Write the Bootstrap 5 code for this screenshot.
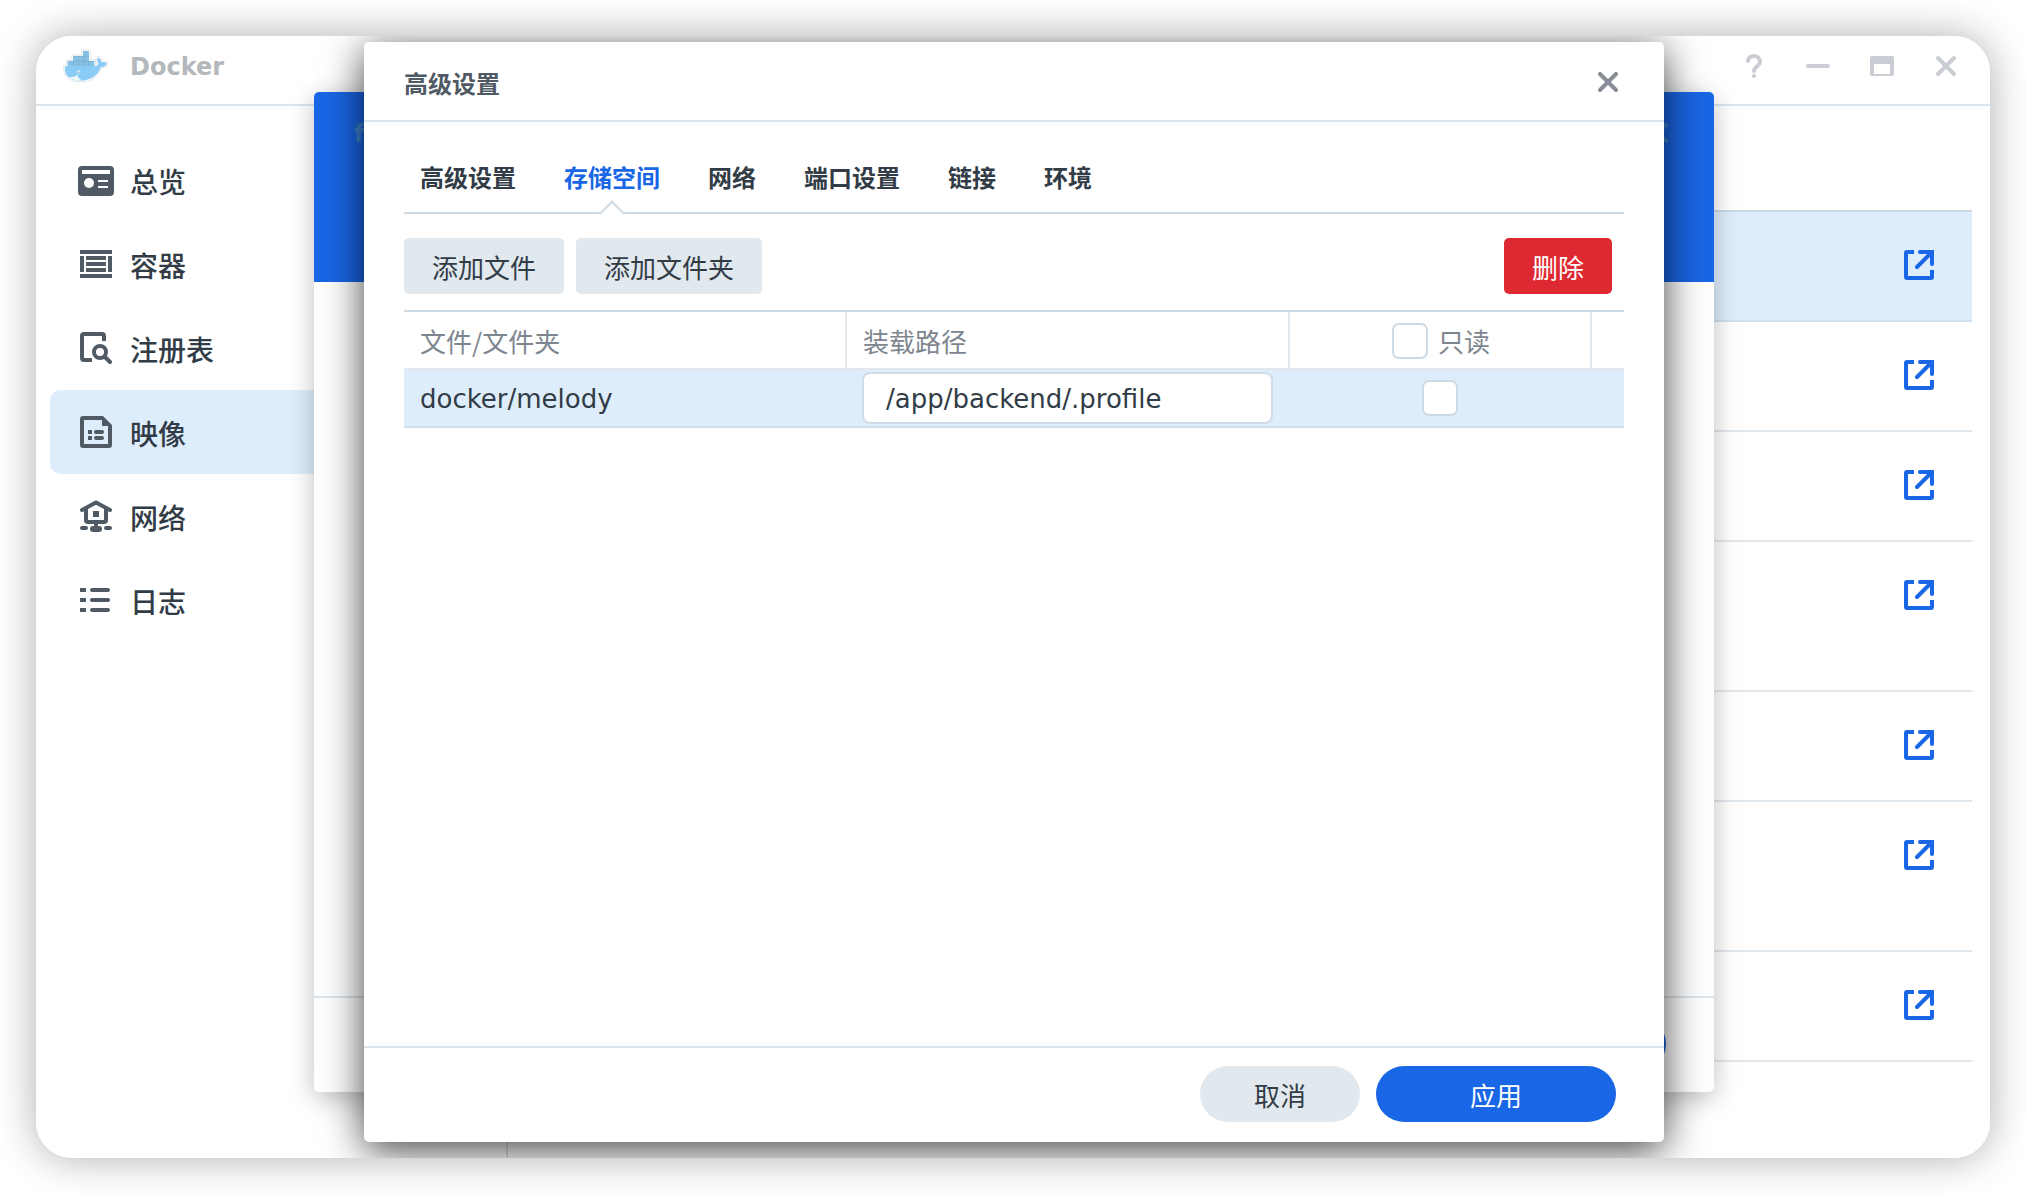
<!DOCTYPE html>
<html lang="zh-CN">
<head>
<meta charset="utf-8">
<meta name="viewport" content="width=device-width, initial-scale=1">
<title>Docker</title>
<link href="https://cdn.jsdelivr.net/npm/bootstrap@5.3.0/dist/css/bootstrap.min.css" rel="stylesheet">
<style>
  :root {
    --ui-blue: #1966e6;
    --ui-ink: #323c46;
    --ui-line: #dbe5ed;
    --ui-line-strong: #cddae4;
    --ui-select: #deedfc;
    --ui-soft: #e1e8ee;
  }
  body { font-family: "Noto Sans CJK SC", "DejaVu Sans", sans-serif; color: var(--ui-ink); font-size: 26px; line-height: 40px; background: #fff; }
  .latin { font-family: "DejaVu Sans", "Noto Sans CJK SC", sans-serif; }
  .desktop { height: 100vh; min-height: 800px; padding: 36px; overflow: hidden; }
  .app-window { border-radius: 36px; box-shadow: 0 0 42px rgba(0,0,0,.32); }
  .app-clip { border-radius: inherit; }
  .app-bar { height: 70px; padding: 0 32px 8px 26px; border-bottom: 2px solid var(--ui-line); }
  .app-name { font-size: 24px; font-weight: 700; color: #b3b8bc; padding-top: 2px; }
  .bare { border: 0; background: none; padding: 0; display: block; line-height: 0; }
  .window-tools { gap: 40px; color: #cacdd3; }
  .window-tools .bare { color: inherit; }

  .side { width: 472px; padding: 32px 14px; border-right: 2px solid var(--ui-line); }
  .side-item { height: 84px; padding: 2px 28px 0; gap: 16px; border-radius: 10px; font-size: 28px; font-weight: 500; color: var(--ui-ink); text-decoration: none; }
  .side-item svg { color: #505a64; margin-bottom: 2px; }
  .side-item.active { background: var(--ui-select); }

  .image-list { margin: 104px 18px 0 0; border-top: 2px solid var(--ui-line-strong); }
  .image-row { height: 110px; padding: 38px 38px 0; border-bottom: 2px solid #e1e8ed; color: var(--ui-blue); }
  .image-row.tall { height: 150px; }
  .image-row.active { background: var(--ui-select); border-color: #d1e0ee; }
  .image-row a { color: inherit; line-height: 0; }

  .layer { position: absolute; inset: 0; }
  .layer-back { padding: 56px 276px 66px 278px; }
  .layer-front { padding: 6px 326px 16px 328px; }
  .dlg { background: #fff; border-radius: 5px; overflow: hidden; }
  .layer-back .dlg { box-shadow: 0 6px 26px rgba(0,0,0,.26); }
  .layer-front .dlg { box-shadow: 0 8px 40px rgba(0,0,0,.74); }
  .dlg-head { height: 80px; padding: 2px 46px 0 40px; border-bottom: 2px solid var(--ui-line); }
  .dlg-title { font-size: 24px; font-weight: 700; color: #505a64; line-height: 40px; padding-top: 2px; }
  .dlg-head .bare { color: #868e98; }
  .hero { height: 190px; background: var(--ui-blue); }
  .hero .dlg-head { border: 0; }
  .hero .dlg-title, .hero .bare { color: #3f86d0; }
  .dlg-body { padding: 0 40px; }
  .dlg-foot { height: 96px; padding: 0 48px 2px; gap: 16px; border-top: 2px solid var(--ui-line); }
  .pill { height: 56px; font-size: 26px; line-height: 40px; padding: 9px 8px 7px; border: 0; border-radius: 28px; width: 160px; background: var(--ui-soft); color: var(--ui-ink); }
  .pill-main { width: 240px; background: var(--ui-blue); color: #fff; }

  .tab-strip { padding: 32px 16px 0; gap: 48px; height: 92px; border-bottom: 2px solid var(--ui-line-strong); list-style: none; }
  .tab-btn { border: 0; background: none; padding: 3px 0 15px; font-size: 24px; line-height: 40px; font-weight: 700; color: var(--ui-ink); position: relative; display: block; }
  .tab-btn.active { color: var(--ui-blue); }
  .tab-btn.active::after { content: ""; position: absolute; left: 50%; bottom: -10px; width: 18px; height: 18px; margin-left: -9px; transform: rotate(45deg); background: #fff; border: solid var(--ui-line-strong); border-width: 2px 0 0 2px; }

  .tools { padding: 24px 12px 16px 0; gap: 12px; }
  .tool-btn { height: 56px; padding: 9px 28px 7px; border: 0; border-radius: 5px; font-size: 26px; line-height: 40px; background: var(--ui-soft); color: var(--ui-ink); }
  .tool-btn.danger { background: #de2932; color: #fff; }

  .mounts { table-layout: fixed; border-collapse: separate; border-spacing: 0; border-top: 2px solid var(--ui-line-strong); width: 100%; }
  .mounts th { height: 58px; padding: 2px 14px 0 16px; font-weight: 400; color: #7d868f; border-right: 2px solid #e1e8ed; border-bottom: 2px solid #e1e8ed; }
  .mounts th:last-child { border-right: 0; }
  .mounts td { height: 58px; padding: 0 18px 0 16px; background: var(--ui-select); border-bottom: 2px solid #d1e0ee; }
  .mounts td:first-child { padding-top: 2px; }
  .mounts td:nth-child(2) { padding: 0 17px 0 15px; }
  .path-box { display: block; height: 52px; width: 100%; border: 2px solid #d1dce6; border-radius: 8px; padding: 2px 22px 0; font-size: 26px; color: var(--ui-ink); background: #fff; }
  .col-path { width: 443px; }
  .col-ro { width: 302px; }
  .mounts .tick { width: 36px; height: 36px; margin: 0; border: 2px solid var(--ui-line-strong); border-radius: 7px; background-color: #fff; flex: none; display: block; }
  .tick-label { gap: 10px; }
</style>
</head>
<body>
<svg class="d-none" xmlns="http://www.w3.org/2000/svg">
  <symbol id="i-open" viewBox="0 0 30 30"><g fill="none" stroke="currentColor" stroke-width="4"><path d="M10 2H3Q2 2 2 3V27Q2 28 3 28H27Q28 28 28 27V20"/><path d="M16 2H28V14M28 2L13 17" stroke-linecap="round"/></g></symbol>
  <symbol id="i-x" viewBox="0 0 24 24"><path d="M4 4L20 20M20 4L4 20" fill="none" stroke="currentColor" stroke-width="4" stroke-linecap="round"/></symbol>
</svg>

<div class="desktop d-flex">
  <div class="app-window flex-fill d-flex">
    <div class="app-clip flex-fill d-flex flex-column bg-white position-relative overflow-hidden">
      <header class="app-bar d-flex align-items-center justify-content-between">
        <div class="d-flex align-items-center">
          <svg width="48" height="34" viewBox="186 147 144 102" aria-hidden="true">
            <path d="M195 198L203 196V183H219V168H249V153H267V183H283V198H288C296 196 297 190 292 184C288 180 293 173 296 173C301 176 304 182 305 187C311 185 318 187 321 191C317 199 309 202 303 202C291 229 271 242 240 242C209 242 191 226 195 198Z" fill="#fff" stroke="#d9dde0" stroke-width="9" stroke-linejoin="round"/>
            <path d="M195 198L203 196V183H219V168H249V153H267V183H283V198H288C296 196 297 190 292 184C288 180 293 173 296 173C301 176 304 182 305 187C311 185 318 187 321 191C317 199 309 202 303 202C291 229 271 242 240 242C209 242 191 226 195 198Z" fill="#8accf5" stroke="#fff" stroke-width="5" stroke-linejoin="round"/>
            <path d="M195 198H288C296 196 297 190 292 184C288 180 293 173 296 173C301 176 304 182 305 187C311 185 318 187 321 191C317 199 309 202 303 202C291 229 271 242 240 242C209 242 191 226 195 198Z" fill="#8accf5"/>
            <path d="M203 183H219V168H249V153H267V183H283V198H203Z" fill="#86c0e3"/>
            <path d="M219 183V198M235 168V198M251 168V198M267 183V198M203 184H283M219 169H267" stroke="#6fabcf" stroke-width="1.5" fill="none"/>
            <circle cx="236" cy="216" r="5" fill="#e9f5fc"/><circle cx="236" cy="217" r="2.500" fill="#879aa6"/>
            <path d="M205 231C217 233 226 230 232 224C233 232 237 237 246 241C229 244 214 239 205 231Z" fill="#f0f7fb"/>
          </svg>
          <span class="app-name latin ms-3 ps-1">Docker</span>
        </div>
        <div class="window-tools d-flex align-items-center">
          <button class="bare" type="button" aria-label="帮助"><svg width="24" height="24" viewBox="0 0 24 24"><path d="M6 7C6 3.500 9 2 12 2S18 4 18 8C18 12 12 12.500 12 17" fill="none" stroke="currentColor" stroke-width="4" stroke-linecap="round"/><circle cx="12" cy="22" r="2" fill="currentColor"/></svg></button>
          <button class="bare" type="button" aria-label="最小化"><svg width="24" height="24" viewBox="0 0 24 24"><rect y="10" width="24" height="4" rx="2" fill="currentColor"/></svg></button>
          <button class="bare" type="button" aria-label="最大化"><svg width="24" height="24" viewBox="0 0 24 24"><path fill="currentColor" fill-rule="evenodd" d="M2 2H22Q24 2 24 4V20Q24 22 22 22H2Q0 22 0 20V4Q0 2 2 2ZM4 10V20H20V10Z"/></svg></button>
          <button class="bare" type="button" aria-label="关闭"><svg width="24" height="24"><use href="#i-x"/></svg></button>
        </div>
      </header>

      <div class="flex-fill d-flex">
        <nav class="side flex-shrink-0">
          <a class="side-item d-flex align-items-center" href="#"><svg width="36" height="32" viewBox="0 0 36 32" fill="currentColor"><rect y="2" width="36" height="30" rx="4"/><g fill="#fff"><path d="M4 6H32V10H4ZM20 16H30V18H20ZM20 22H30V24H20Z"/><circle cx="11" cy="19" r="5"/></g></svg>总览</a>
          <a class="side-item d-flex align-items-center" href="#"><svg width="36" height="32" viewBox="0 0 36 32" fill="currentColor"><path d="M2 2H34V6H2ZM2 26H34V30H2ZM2 8H6V24H2ZM30 8H34V24H30ZM8 8H28V12H8ZM8 14H28V18H8ZM8 20H28V24H8Z"/></svg>容器</a>
          <a class="side-item d-flex align-items-center" href="#"><svg width="36" height="32" viewBox="0 0 36 32" fill="none" stroke="currentColor" stroke-width="4"><path d="M26 9V4Q26 2 24 2H6Q4 2 4 4V26Q4 28 6 28H14"/><circle cx="22" cy="20" r="6"/><path d="M26.500 24.500L32 30" stroke-linecap="round"/></svg>注册表</a>
          <a class="side-item active d-flex align-items-center" href="#" aria-current="page"><svg width="36" height="32" viewBox="0 0 36 32" fill="currentColor"><path fill-rule="evenodd" d="M5 0H25L34 9V29Q34 32 31 32H5Q2 32 2 29V3Q2 0 5 0ZM6 4V28H30V10H24V4Z"/><path d="M10 14H14V18H10ZM10 20H14V24H10Z"/><rect x="16" y="14" width="10" height="4" rx="2"/><rect x="16" y="20" width="10" height="4" rx="2"/></svg>映像</a>
          <a class="side-item d-flex align-items-center" href="#"><svg width="36" height="32" viewBox="0 0 36 32" fill="currentColor"><path d="M4 10L18 2.500L32 10M8 9V20Q8 22 10 22H26Q28 22 28 20V9" fill="none" stroke="currentColor" stroke-width="4" stroke-linecap="round"/><path d="M15 11H21V17H15ZM16 23H20V28H16Z"/><rect x="2" y="26" width="8" height="4" rx="2"/><rect x="12" y="26" width="12" height="6" rx="3"/><rect x="26" y="26" width="8" height="4" rx="2"/></svg>网络</a>
          <a class="side-item d-flex align-items-center" href="#"><svg width="36" height="32" viewBox="0 0 36 32" fill="currentColor"><path d="M2 4H8V8H2ZM2 14H8V18H2ZM2 24H8V28H2Z"/><rect x="12" y="4" width="20" height="4" rx="2"/><rect x="12" y="14" width="20" height="4" rx="2"/><rect x="12" y="24" width="20" height="4" rx="2"/></svg>日志</a>
        </nav>
        <main class="flex-fill">
          <div class="image-list">
            <div class="image-row active d-flex justify-content-end align-items-start"><a href="#" aria-label="打开"><svg width="30" height="30"><use href="#i-open"/></svg></a></div>
            <div class="image-row d-flex justify-content-end align-items-start"><a href="#" aria-label="打开"><svg width="30" height="30"><use href="#i-open"/></svg></a></div>
            <div class="image-row d-flex justify-content-end align-items-start"><a href="#" aria-label="打开"><svg width="30" height="30"><use href="#i-open"/></svg></a></div>
            <div class="image-row tall d-flex justify-content-end align-items-start"><a href="#" aria-label="打开"><svg width="30" height="30"><use href="#i-open"/></svg></a></div>
            <div class="image-row d-flex justify-content-end align-items-start"><a href="#" aria-label="打开"><svg width="30" height="30"><use href="#i-open"/></svg></a></div>
            <div class="image-row tall d-flex justify-content-end align-items-start"><a href="#" aria-label="打开"><svg width="30" height="30"><use href="#i-open"/></svg></a></div>
            <div class="image-row d-flex justify-content-end align-items-start"><a href="#" aria-label="打开"><svg width="30" height="30"><use href="#i-open"/></svg></a></div>
          </div>
        </main>
      </div>

      <div class="layer layer-back d-flex">
        <section class="dlg flex-fill d-flex flex-column">
          <div class="hero">
            <div class="dlg-head d-flex align-items-center justify-content-between">
              <h2 class="dlg-title latin mb-0">f</h2>
              <button class="bare" type="button" aria-label="关闭"><svg width="20" height="20" viewBox="2 2 20 20"><use href="#i-x" width="24" height="24"/></svg></button>
            </div>
          </div>
          <div class="flex-fill"></div>
          <div class="dlg-foot d-flex align-items-center justify-content-end">
            <button class="pill pill-main" type="button" aria-label="下一步"></button>
          </div>
        </section>
      </div>

      <div class="layer layer-front d-flex">
        <section class="dlg flex-fill d-flex flex-column" role="dialog" aria-labelledby="dlg-title">
          <div class="dlg-head d-flex align-items-center justify-content-between">
            <h2 class="dlg-title mb-0" id="dlg-title">高级设置</h2>
            <button class="bare" type="button" aria-label="关闭"><svg width="20" height="20" viewBox="2 2 20 20"><use href="#i-x" width="24" height="24"/></svg></button>
          </div>
          <div class="dlg-body flex-fill">
            <ul class="tab-strip d-flex mb-0" role="tablist">
              <li role="presentation"><button class="tab-btn" type="button" role="tab">高级设置</button></li>
              <li role="presentation"><button class="tab-btn active" type="button" role="tab" aria-selected="true">存储空间</button></li>
              <li role="presentation"><button class="tab-btn" type="button" role="tab">网络</button></li>
              <li role="presentation"><button class="tab-btn" type="button" role="tab">端口设置</button></li>
              <li role="presentation"><button class="tab-btn" type="button" role="tab">链接</button></li>
              <li role="presentation"><button class="tab-btn" type="button" role="tab">环境</button></li>
            </ul>
            <div class="tools d-flex">
              <button class="tool-btn" type="button">添加文件</button>
              <button class="tool-btn" type="button">添加文件夹</button>
              <button class="tool-btn danger ms-auto" type="button">删除</button>
            </div>
            <table class="mounts">
              <colgroup><col class="col-path"><col class="col-path"><col class="col-ro"><col></colgroup>
              <thead>
                <tr>
                  <th scope="col">文件/文件夹</th>
                  <th scope="col">装载路径</th>
                  <th scope="col"><div class="tick-label d-flex align-items-center justify-content-center"><input class="form-check-input tick" type="checkbox" id="ro-all"><label for="ro-all">只读</label></div></th>
                  <th></th>
                </tr>
              </thead>
              <tbody>
                <tr>
                  <td class="latin">docker/melody</td>
                  <td><input class="path-box latin" type="text" value="/app/backend/.profile" aria-label="装载路径"></td>
                  <td><input class="form-check-input tick mx-auto" type="checkbox" aria-label="只读"></td>
                  <td></td>
                </tr>
              </tbody>
            </table>
          </div>
          <div class="dlg-foot d-flex align-items-center justify-content-end">
            <button class="pill" type="button">取消</button>
            <button class="pill pill-main" type="button">应用</button>
          </div>
        </section>
      </div>
    </div>
  </div>
</div>
<script src="https://cdn.jsdelivr.net/npm/bootstrap@5.3.0/dist/js/bootstrap.bundle.min.js"></script>
</body>
</html>
